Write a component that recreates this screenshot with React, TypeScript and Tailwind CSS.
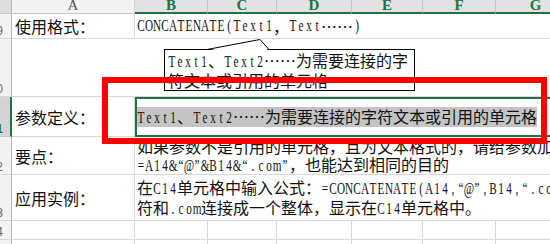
import React from "react";

// latin chars sit in half-width cells, like SimSun does it
const T = ({ s }: { s: string }) => {
  const parts = s.match(/[\x20-\x7e“”]|[^\x20-\x7e“”]+/g) || [];
  return (
    <>
      {parts.map((p, i) =>
        /^[\x20-\x7e“”]$/.test(p) ? (
          <span
            key={i}
            className="inline-flex w-[8px] justify-center scale-x-[0.7] font-['Liberation_Serif',serif]"
          >
            {p}
          </span>
        ) : (
          <span key={i}>{p}</span>
        )
      )}
    </>
  );
};

const cols = ["B", "C", "D", "E", "F", "G"];

const RowNum = ({ n, active }: { n: number; active?: boolean }) => (
  <div
    className={
      active
        ? "flex items-end overflow-hidden bg-[#d4d4d4] border-r-2 border-[#217346] border-b border-b-[#c8c8c8]"
        : "flex items-end overflow-hidden bg-[#f3f3f3] border-r border-[#b4b4b4] border-b border-b-[#d8d8d8]"
    }
  >
    <span
      className={
        "-ml-[17px] w-[20px] shrink-0 text-right font-['Liberation_Sans',sans-serif] text-[12px] leading-[14px] " +
        (active ? "text-[#217346] font-bold" : "text-[#666]")
      }
    >
      {n}
    </span>
  </div>
);

export default function App() {
  return (
    <div
      lang="zh-CN"
      className="relative w-[550px] h-[244px] overflow-hidden bg-white text-[16px] leading-[18px] text-[#111] font-['Noto_Sans_CJK_SC',sans-serif]"
    >
      <div className="grid grid-cols-[12px_123px_73px_69px_75px_71px_73px_80px] grid-rows-[14px_25px_58px_40px_38px_46px_19px_20px]">
        {/* column headers */}
        <div className="bg-[#dedede] border-r border-[#b4b4b4] border-b border-b-[#c6c6c6]" />
        <div className="flex justify-center items-end overflow-hidden bg-[#f3f3f3] border-r border-[#d0d0d0] border-b border-b-[#c6c6c6] font-['Liberation_Serif',serif] text-[15px] leading-[15px] text-[#555]">
          A
        </div>
        {cols.map((c) => (
          <div
            key={c}
            className="flex justify-center items-end overflow-hidden bg-[#e2e2e2] border-r border-[#c4c4c4] border-b-2 border-b-[#217346] font-['Liberation_Serif',serif] font-bold text-[15px] leading-[14px] text-[#217346]"
          >
            {c}
          </div>
        ))}

        {/* 使用格式 */}
        <RowNum n={9} />
        <div className="flex items-center pl-[3px] border-r border-b border-[#d8d8d8]">使用格式：</div>
        <div className="col-span-6 flex items-center pl-[2px] whitespace-nowrap border-b border-[#d8d8d8]">
          <T s="CONCATENATE(Text1，Text……)" />
        </div>

        {/* comment row */}
        <RowNum n={10} />
        <div className="col-span-7 border-b border-[#d8d8d8]" />

        {/* 参数定义 */}
        <RowNum n={11} active />
        <div className="flex items-center pl-[3px] border-r border-b border-[#d8d8d8]">参数定义：</div>
        <div className="col-span-6 flex items-center whitespace-nowrap border-2 border-[#217346]">
          <span className="bg-[#c4c4c4]">
            <T s="Text1、Text2……为需要连接的字符文本或引用的单元格" />
          </span>
        </div>

        {/* 要点 */}
        <RowNum n={12} />
        <div className="flex items-center pl-[3px] border-r border-b border-[#d8d8d8]">要点：</div>
        <div className="col-span-6 flex flex-col justify-center pl-[2px] whitespace-nowrap overflow-hidden border-b border-[#d8d8d8]">
          <div>如果参数不是引用的单元格，且为文本格式的，请给参数加上英文状态下的双引号，如</div>
          <div>
            <T s="=A14&“@”&B14&“.com”，也能达到相同的目的" />
          </div>
        </div>

        {/* 应用实例 */}
        <RowNum n={13} />
        <div className="flex items-center pl-[3px] border-r border-b border-[#d8d8d8]">应用实例：</div>
        <div className="col-span-6 flex flex-col justify-center pl-[2px] whitespace-nowrap overflow-hidden border-b border-[#d8d8d8]">
          <div>
            <T s="在C14单元格中输入公式：=CONCATENATE(A14,“@”,B14,“.com”)，将A14中的名称和@" />
          </div>
          <div>
            <T s="符和.com连接成一个整体，显示在C14单元格中。" />
          </div>
        </div>

        {/* empty rows */}
        {[14, 15].map((n) => (
          <React.Fragment key={n}>
            <RowNum n={n} />
            <div className="border-r border-b border-[#d8d8d8]" />
            {cols.map((c) => (
              <div key={c} className="border-r border-b border-[#d8d8d8]" />
            ))}
          </React.Fragment>
        ))}
      </div>

      {/* comment box */}
      <div className="absolute left-[164px] top-[49px] w-[251px] h-[42px] border border-black bg-white pl-[3px] pt-[1px] whitespace-nowrap overflow-hidden">
        <div>
          <T s="Text1、Text2……为需要连接的字" />
        </div>
        <div>符文本或引用的单元格</div>
      </div>
      <svg className="absolute left-[200px] top-[36px]" width="75" height="16" viewBox="0 0 75 16">
        <polygon points="8,14.5 60,3.5 68,14.5" fill="#fff" />
        <polyline points="7,13.5 60,3.5 69,13.5" fill="none" stroke="#000" strokeWidth="1" />
      </svg>

      {/* red highlight frame */}
      <div className="absolute left-[102px] top-[77px] w-[445px] h-[67px] border-[6px] border-[#ff0000]" />
    </div>
  );
}
